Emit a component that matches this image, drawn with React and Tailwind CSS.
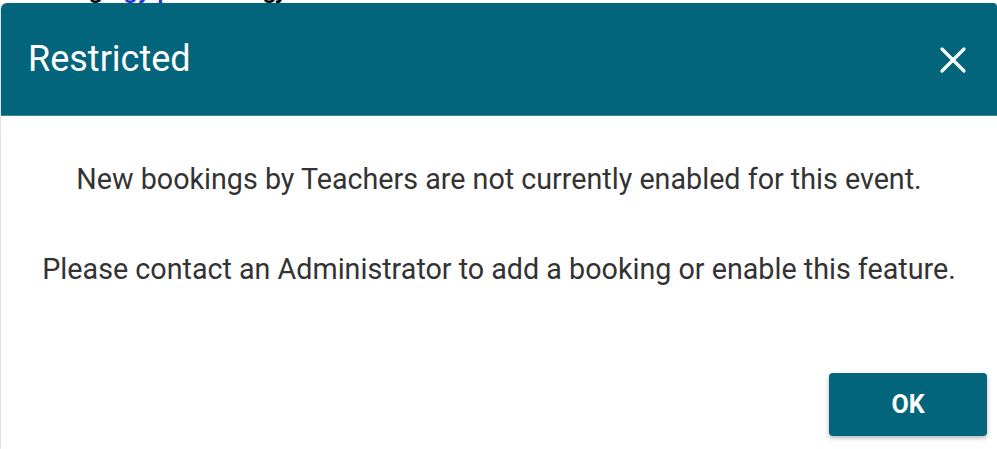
import React from "react";

export default function App() {
  return (
    <div className="relative w-[997px] h-[449px] overflow-hidden bg-white" style={{ fontFamily: "Roboto, 'Liberation Sans', sans-serif" }}>
      <div className="absolute left-[8px] top-[-24px] text-[26px] leading-[26px] font-medium text-black whitespace-nowrap">
        <span>Bookings </span>
        <span className="text-[#2233dd]">gy</span>
        <span> </span>
        <span className="text-[#2233dd]">p</span>
        <span> Events gj</span>
      </div>
      <div className="absolute left-[1px] top-[3px] right-0 bottom-0 flex flex-col bg-white rounded-tl-md rounded-tr-sm shadow-[-1px_0_2px_rgba(0,0,0,0.15)]">
        <div className="flex items-center justify-between h-[113px] bg-[#03657b] rounded-tl-md rounded-tr-sm border-b border-[#3f8a9a] pl-[27px] pr-[30px]">
          <h2 className="text-[36px] leading-none text-white font-normal">Restricted</h2>
          <svg width="28" height="28" viewBox="0 0 28 28" className="mt-[1px]">
            <path d="M3 3 L25 25 M25 3 L3 25" stroke="white" strokeWidth="3.2" strokeLinecap="round" />
          </svg>
        </div>
        <div className="flex flex-col items-center pt-[45px] text-[28.7px] leading-[36px] text-[#333333] gap-[54px]">
          <p>New bookings by Teachers are not currently enabled for this event.</p>
          <p>Please contact an Administrator to add a booking or enable this feature.</p>
        </div>
        <div className="flex-1" />
        <div className="flex justify-end pr-[10px] pb-[13px]">
          <button className="w-[158px] h-[63px] rounded-[4px] bg-[#03657b] text-white text-[25px] font-bold shadow-[0_2px_4px_rgba(0,0,0,0.3)]">OK</button>
        </div>
      </div>
    </div>
  );
}
